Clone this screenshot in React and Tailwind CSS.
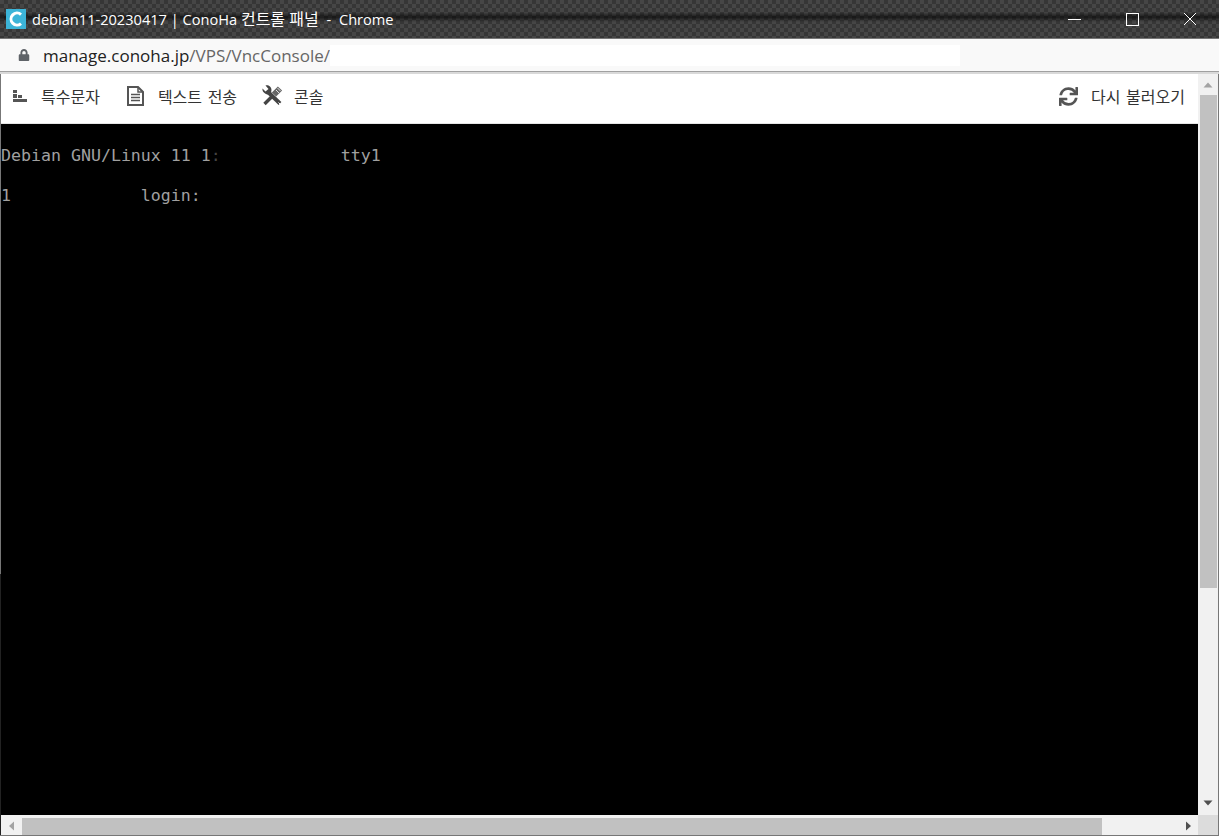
import React from 'react';
import { FaLock, FaSync } from 'react-icons/fa';

const uiFont = "font-['Open_Sans','Noto_Sans_CJK_KR',sans-serif]";
const krFont = "font-['Noto_Sans_CJK_KR','Noto_Sans',sans-serif]";

const CharsIcon = () => (
  <svg width="14" height="14" viewBox="0 0 14 14" fill="#555">
    <rect x="0" y="0" width="4" height="3" />
    <rect x="0" y="4" width="4" height="4" />
    <rect x="5" y="5" width="4" height="3" />
    <rect x="0" y="9" width="14" height="3" />
  </svg>
);

const DocIcon = () => (
  <svg width="17" height="20" viewBox="0 0 17 20" fill="none" stroke="#555" strokeWidth="2">
    <path d="M1 1H11L16 6V19H1Z" />
    <path d="M11 1V6H16" strokeWidth="1.5" />
    <path d="M4 8.5H13M4 11.5H13M4 14.5H13" strokeWidth="1.4" />
  </svg>
);

const ToolsIcon = () => (
  <svg width="21" height="21" viewBox="0 0 21 21" fill="none">
    {/* wrench */}
    <path d="M6 7L18 18.5" stroke="#444" strokeWidth="4" />
    <path d="M0.5 3.5L3.5 6.5L6.5 4L3.5 0.5C6 -0.5 9.5 1.5 9.5 5L9 8L7 9.5C3.5 9.5 0 7 0.5 3.5Z" fill="#444" />
    <path d="M16.5 17.5L18 19" stroke="#fff" strokeWidth="1" />
    {/* screwdriver */}
    <path d="M2.5 19L10 11.5" stroke="#444" strokeWidth="3.4" />
    <path d="M12 9.5L18 3.5" stroke="#666" strokeWidth="6" />
    <path d="M14 5L17 8M15.5 3L18.5 6" stroke="#fff" strokeWidth="0.8" />
  </svg>
);

const ToolButton = ({ icon, label, className }) => (
  <div className={`flex items-center ${className}`}>
    {icon}
    <span className={`${krFont} text-[16px] text-[#333] -mt-[5px] whitespace-nowrap [word-spacing:2px]`}>{label}</span>
  </div>
);

const Arrow = ({ points, fill }) => (
  <svg width="10" height="10" viewBox="0 0 10 10" fill={fill}>
    <polygon points={points} />
  </svg>
);

const App = () => {
  return (
    <div className="w-[1219px] h-[836px] flex flex-col overflow-hidden bg-white">
      {/* Title bar */}
      <div className="h-[38px] flex items-center relative bg-[#3a3a3a] bg-[repeating-conic-gradient(#363636_0_25%,#464646_0_50%)] bg-[length:8px_8px]">
        <div className="absolute inset-x-0 top-[12px] h-[10px] bg-gradient-to-b from-transparent via-black/60 to-transparent" />
        <div className="relative ml-[6px] w-[20px] h-[20px] bg-[#3cb4d8] flex items-center justify-center">
          <svg width="16" height="16" viewBox="0 0 16 16" fill="none" stroke="white" strokeWidth="3">
            <path d="M13 3.5A6 6 0 1 0 13 12.5" />
          </svg>
        </div>
        <span className={`relative ml-[6px] ${uiFont} text-[14.6px] text-white whitespace-nowrap`}>
          debian11-20230417 | ConoHa <span className="text-[16px]">컨트롤 패널</span> <span className="ml-[4px] mr-[4px]">-</span> Chrome
        </span>
        <div className="relative ml-auto flex items-center">
          <div className="w-[58px] flex justify-center">
            <div className="w-[13px] h-px bg-white" />
          </div>
          <div className="w-[58px] flex justify-center">
            <div className="w-[13px] h-[13px] border border-white" />
          </div>
          <div className="w-[58px] flex justify-center">
            <svg width="14" height="14" viewBox="0 0 14 14" stroke="white" strokeWidth="1">
              <path d="M1 1L13 13M13 1L1 13" />
            </svg>
          </div>
        </div>
      </div>

      {/* Address bar */}
      <div className="h-[33px] flex items-center bg-[#f9f9f9] border-t border-[#777]">
        <FaLock className="ml-[18px] text-[#5f6368]" size={12} />
        <span className={`ml-[13px] mt-[2px] w-[286px] ${uiFont} text-[17px] text-[#666] whitespace-nowrap`}>
          <span className="text-[#222]">manage.conoha.jp</span>/VPS/VncConsole/
        </span>
        <div className="ml-[1px] w-[630px] h-[21px] bg-white" />
      </div>
      <div className="h-[3px] bg-[#d9d9d9] border-t border-[#a0a0a0]" />

      {/* Page with scrollbars */}
      <div className="flex-1 flex min-h-0 relative border-l border-[#777] border-r border-b">
        <div className="absolute -left-px top-[500px] bottom-0 w-px bg-[#222]" />
        <div className="flex-1 flex flex-col min-w-0">
          <div className="h-[50px] flex items-center border-b border-[#e5e5e5]">
            <ToolButton className="ml-[12px]" icon={<span className="mr-[14px] -mt-[3px]"><CharsIcon /></span>} label="특수문자" />
            <ToolButton className="ml-[27px]" icon={<span className="mr-[14px] -mt-[6px]"><DocIcon /></span>} label="텍스트 전송" />
            <ToolButton className="ml-[25px]" icon={<span className="mr-[11px] -mt-[7px]"><ToolsIcon /></span>} label="콘솔" />
            <ToolButton className="ml-auto mr-[13px]" icon={<FaSync className="mr-[13px] -mt-[4px] text-[#555]" size={19} />} label="다시 불러오기" />
          </div>
          <div className="flex-1 bg-black pt-[22px] text-[16.6px] leading-[20px] text-[#a0a0a0]">
            <pre className="font-['DejaVu_Sans_Mono',monospace] h-[40px]">{'Debian GNU/Linux 11 1'}<span className="text-[#444]">:</span>{'            tty1'}</pre>
            <pre className="font-['DejaVu_Sans_Mono',monospace]">{'1             login:'}</pre>
          </div>
          {/* Horizontal scrollbar */}
          <div className="h-[20px] flex items-center bg-[#f1f1f1] pt-[2px]">
            <div className="w-[21px] flex justify-center">
              <Arrow points="7,0.5 2,5 7,9.5" fill="#a3a3a3" />
            </div>
            <div className="w-[1080px] h-[17px] bg-[#c1c1c1]" />
            <div className="ml-auto w-[21px] flex justify-center">
              <Arrow points="3,0.5 8,5 3,9.5" fill="#505050" />
            </div>
          </div>
        </div>

        {/* Vertical scrollbar */}
        <div className="w-[20px] flex flex-col bg-[#f1f1f1]">
          <div className="h-[21px] flex items-center justify-center">
            <Arrow points="0.5,7.5 5,2.5 9.5,7.5" fill="#a3a3a3" />
          </div>
          <div className="mx-auto w-[17px] h-[493px] bg-[#c1c1c1]" />
          <div className="mt-auto h-[21px] pb-[4px] flex items-center justify-center">
            <Arrow points="0.5,2.5 5,7.5 9.5,2.5" fill="#505050" />
          </div>
          <div className="h-[20px] bg-[#dcdcdc]" />
        </div>
      </div>
    </div>
  );
};

export default App;
